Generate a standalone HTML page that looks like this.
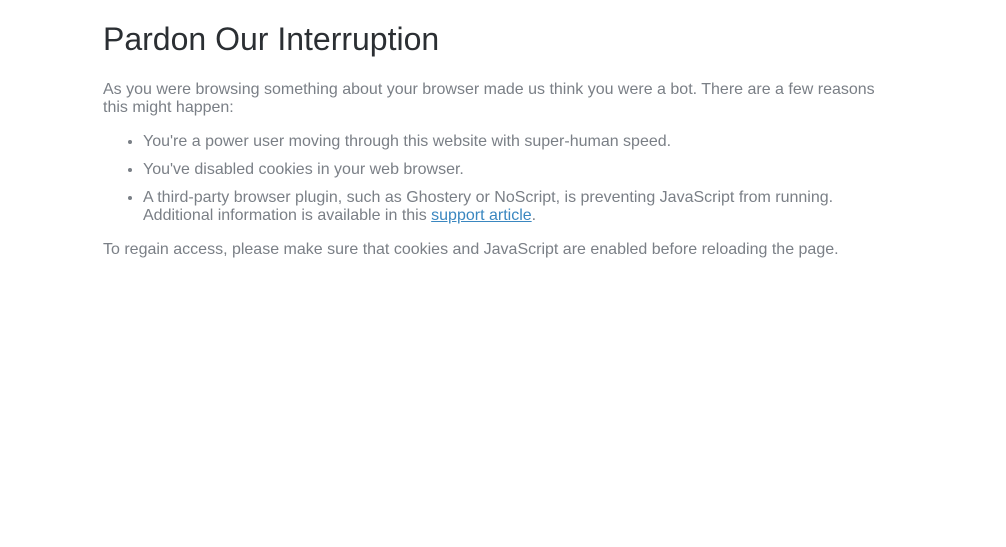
<!DOCTYPE html>
<html><head><meta charset="utf-8"><style>
html,body{margin:0;padding:0;background:#fff;}
body{font-family:"Liberation Sans",Arial,sans-serif;color:#7a7f86;font-size:16px;line-height:18px;}
.c{position:absolute;left:103px;top:0;width:790px;}
h1{font-weight:normal;color:#2b2f33;font-size:32px;line-height:38px;margin:0;position:absolute;top:20px;left:0;white-space:nowrap;}
p{margin:0;}
.p1{position:absolute;top:81px;left:0;width:790px;}
ul{position:absolute;top:133px;left:0;margin:0;padding-left:40px;width:750px;}
li{margin-bottom:10px;}
.p2{position:absolute;top:241px;left:0;white-space:nowrap;}
a{color:#3a87c0;}
</style></head><body><div class="c">
<h1>Pardon Our Interruption</h1>
<p class="p1">As you were browsing something about your browser made us think you were a bot. There are a few reasons this might happen:</p>
<ul>
<li>You're a power user moving through this website with super-human speed.</li>
<li>You've disabled cookies in your web browser.</li>
<li>A third-party browser plugin, such as Ghostery or NoScript, is preventing JavaScript from running. Additional information is available in this <a href="#">support article</a>.</li>
</ul>
<p class="p2">To regain access, please make sure that cookies and JavaScript are enabled before reloading the page.</p>
</div></body></html>
